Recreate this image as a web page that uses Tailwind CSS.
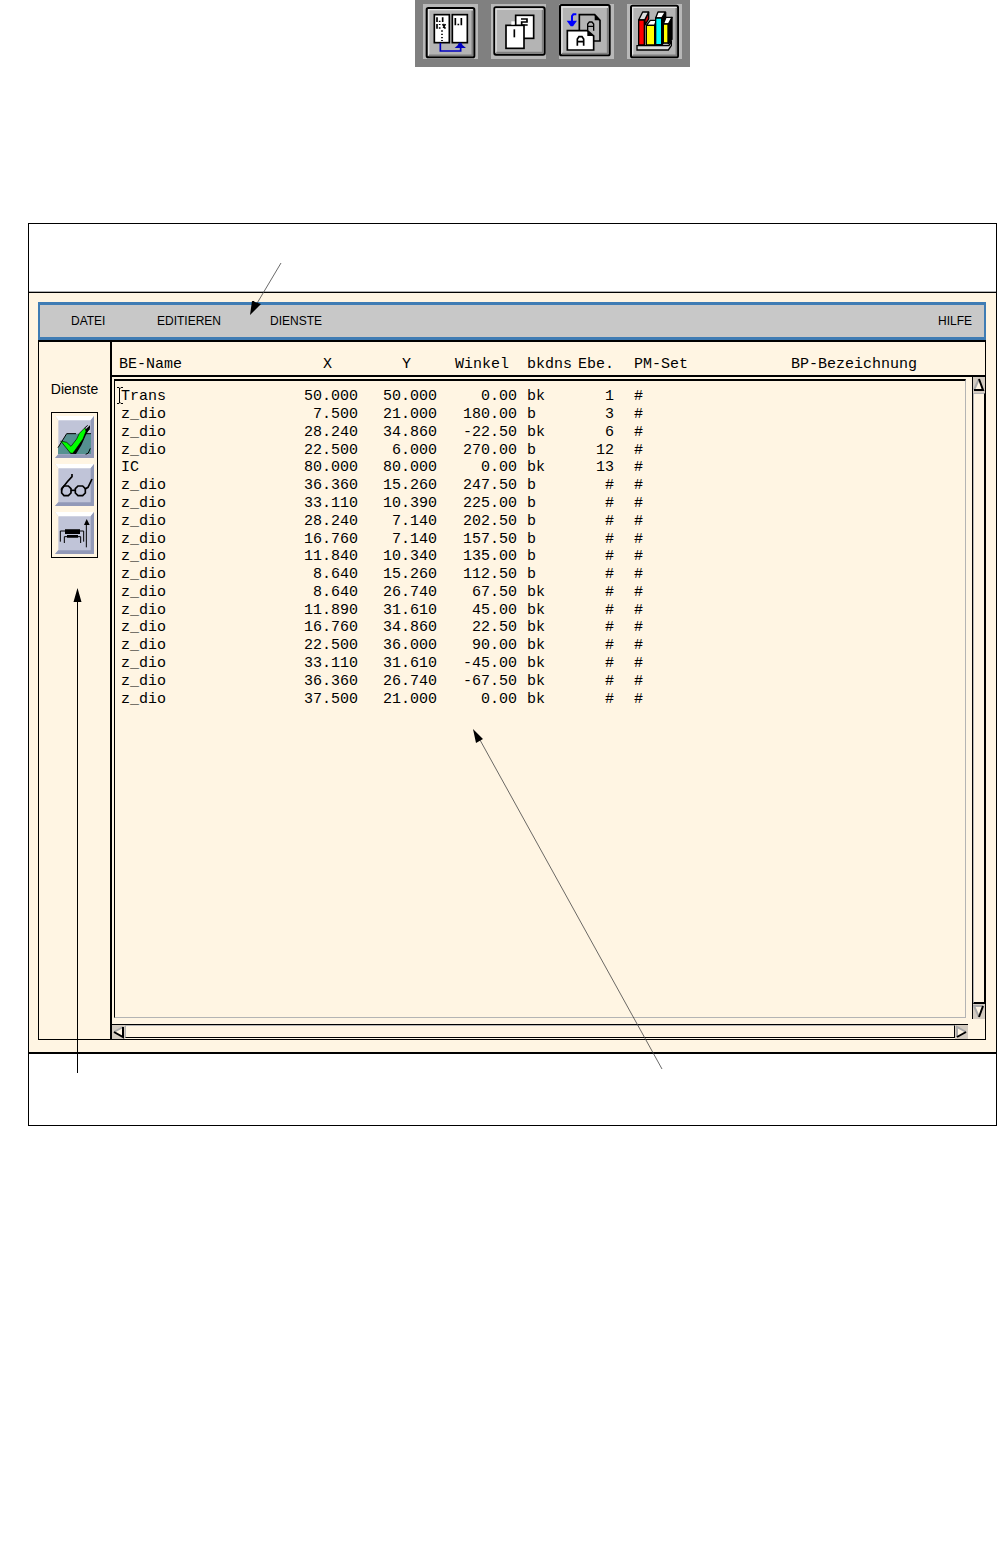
<!DOCTYPE html>
<html lang="de">
<head>
    <meta charset="UTF-8">
    <meta name="viewport" content="width=device-width, initial-scale=1.0">
    <title>BE-Liste</title>
    <script src="https://cdn.jsdelivr.net/npm/@tailwindcss/browser@4"></script>
</head>
<body class="min-h-screen bg-white text-black font-['Liberation_Sans',sans-serif]">
    <!-- Toolbar -->
    <div class="ml-[415px] w-[275px] h-[67px] bg-[#808080] flex gap-[13px] pl-2 pt-1">
        <button type="button" aria-label="Liste sortieren" class="w-[55px] h-[55px] bg-[#b8b8b8]">
            <svg width="55" height="55" viewBox="39 12 165 165">
                <rect x="50" y="24" width="143" height="148" rx="5" fill="#b4b4b4" stroke="#000" stroke-width="6"/>
                <path d="M56 166V29H188" fill="none" stroke="#e4e4e4" stroke-width="4"/>
                <path d="M187 32V166H57" fill="none" stroke="#808080" stroke-width="5"/>
                <rect x="73" y="44" width="45" height="84" fill="#fff" stroke="#000" stroke-width="5"/>
                <rect x="127" y="44" width="45" height="84" fill="#fff" stroke="#000" stroke-width="5"/>
                <path d="M81 52v14M89 62v4M98 52v14M81 72v14M89 72v3M89 82v4M98 72l8 14M106 72l-6 12M96 91v4M96 101v4M96 111v4M96 120v3M136 54v22M145 71v5M154 54v22" fill="none" stroke="#000" stroke-width="5"/>
                <path d="M91 129v24h61v-12" fill="none" stroke="#0000bf" stroke-width="5"/>
                <path d="M134 144h34l-10-8-4-8h-7l-4 8z" fill="#0000bf"/>
            </svg>
        </button>
        <button type="button" aria-label="Seiten" class="w-[55px] h-[55px] bg-[#b8b8b8]">
            <svg width="55" height="55" viewBox="243 12 165 165">
                <rect x="253" y="22" width="151" height="142" rx="5" fill="#b4b4b4" stroke="#000" stroke-width="6"/>
                <path d="M258 158V27H398" fill="none" stroke="#e4e4e4" stroke-width="4"/>
                <path d="M398 30V158H259" fill="none" stroke="#808080" stroke-width="5"/>
                <rect x="317" y="46" width="54" height="69" fill="#fff" stroke="#000" stroke-width="5"/>
                <path d="M333 57h18v9h-16v9h18" fill="none" stroke="#000" stroke-width="5"/>
                <rect x="288" y="76" width="54" height="69" fill="#fff" stroke="#000" stroke-width="5"/>
                <path d="M313 88v24" stroke="#000" stroke-width="5"/>
                <path d="M304 64h10v10h-10z" fill="#fff"/>
            </svg>
        </button>
        <button type="button" aria-label="Ersetzen" class="w-[55px] h-[55px] bg-[#b8b8b8]">
            <svg width="55" height="55" viewBox="27 12 165 165">
                <rect x="30" y="15" width="149" height="151" rx="5" fill="#b4b4b4" stroke="#000" stroke-width="6"/>
                <path d="M36 160V21H174" fill="none" stroke="#e4e4e4" stroke-width="4"/>
                <path d="M173 24V161H36" fill="none" stroke="#808080" stroke-width="5"/>
                <path d="M88 44h46l16 17v62H88z" fill="#b4b4b4" stroke="#000" stroke-width="5"/>
                <path d="M134 44v17h16z" fill="#000"/>
                <path d="M113 92V72l5-6h8l5 6v20M113 79h18" fill="none" stroke="#000" stroke-width="4"/>
                <path d="M52 92h60l19 16v42H52z" fill="#fff" stroke="#000" stroke-width="5"/>
                <path d="M112 92v16h19z" fill="#000"/>
                <path d="M82 137v-20l5-7h9l5 7v20M82 125h19" fill="none" stroke="#000" stroke-width="5"/>
                <path d="M79 43h-9l-4 5v16" fill="none" stroke="#00f" stroke-width="6"/>
                <path d="M50 62h31l-12 17h-7z" fill="#00f"/>
            </svg>
        </button>
        <button type="button" aria-label="Bibliothek" class="w-[55px] h-[55px] bg-[#b8b8b8]">
            <svg width="55" height="55" viewBox="231 12 165 165">
                <rect x="243" y="17" width="141" height="155" rx="5" fill="#b4b4b4" stroke="#000" stroke-width="6"/>
                <path d="M248 166V22H380" fill="none" stroke="#e4e4e4" stroke-width="4"/>
                <path d="M379 24V166H248" fill="none" stroke="#808080" stroke-width="5"/>
                <path d="M261 137h96l7-14v14l-9 13h-94z" fill="#ddd" stroke="#000" stroke-width="4"/>
                <g stroke="#000" stroke-width="4" stroke-linejoin="round">
                    <path d="M284 60l12-23v20l-10 16z" fill="#c00"/>
                    <path d="M266 60l12-24h18l-12 24z" fill="#ddd"/>
                    <path d="M266 60h17v75h-17z" fill="#f00"/>
                    <path d="M289 76l12-15h18l-5 15z" fill="#fff"/>
                    <path d="M289 76h25v59h-25z" fill="#ff0"/>
                    <path d="M335 54l12-17v84l-12 14z" fill="#000"/>
                    <path d="M317 54l7-18h22l-11 18z" fill="#fff"/>
                    <path d="M317 54h18v80h-18z" fill="#0ff"/>
                    <path d="M355 72l11-20v66l-11 13z" fill="#000"/>
                    <path d="M340 72l8-20h18l-11 20z" fill="#fff"/>
                    <path d="M340 72h14v57h-14z" fill="#ff0"/>
                </g>
            </svg>
        </button>
    </div>

    <div class="relative mt-[156px] ml-7 border border-black">
        <div class="h-[68px] border-b border-[#b0b0b0]"></div>

        <!-- Window -->
        <main class="bg-[#fff5e3] border-t border-b-2 border-black pl-[9px] pr-[10px] pt-[9px] pb-3">
            <nav class="h-[38px] bg-[#c8c8c8] border-2 border-y-3 border-[#3f7cb4] flex items-center pl-[31px] pr-3 text-[12px]">
                <button type="button" class="w-[86px] text-left">DATEI</button>
                <button type="button" class="w-[113px] text-left">EDITIEREN</button>
                <button type="button">DIENSTE</button>
                <button type="button" class="ml-auto">HILFE</button>
            </nav>

            <div class="flex border border-t-2 border-black">
                <!-- Services -->
                <aside class="w-[73px] shrink-0 border-r-2 border-black flex flex-col items-center pt-9">
                    <h2 class="text-[14px] leading-[22px]">Dienste</h2>
                    <div class="mt-3 border border-black px-[3px] py-[3px] flex flex-col gap-[6px]">
                        <button type="button" aria-label="Prüfen">
                            <svg class="block" width="39" height="42" viewBox="45 137 117 126">
                                <path d="M45 137h117v126H45z" fill="#c0c4d8"/>
                                <path d="M45 137h117l-10 13H55z" fill="#fff"/>
                                <path d="M45 137l10 13v101l-10 12z" fill="#fff5e3"/>
                                <path d="M162 137v126H45l10-11h97V150z" fill="#9299b8"/>
                                <path d="M54 251v-19l26-42h73v61z" fill="#559090"/>
                                <path d="M54 232l26-42h28M128 190h25M137 252l8-4 6-14" fill="none" stroke="#000" stroke-width="3"/>
                                <path d="M92 250l16 1 16-26 14-32 12-20v-8l-16 15-34 55-24-14z" fill="#000"/>
                                <path d="M62 212l18 4 13 12 17-22 8-17 17-17 3 11-9 23-24 34-7 9-7-1z" fill="#0f0" stroke="#000" stroke-width="2"/>
                                <path d="M134 173l9-8M140 184l10-9" stroke="#000" stroke-width="3"/>
                            </svg>
                        </button>
                        <button type="button" aria-label="Ansehen">
                            <svg class="block" width="39" height="42" viewBox="45 280 117 126">
                                <path d="M45 280h117v126H45z" fill="#c0c4d8"/>
                                <path d="M45 280h117l-10 13H55z" fill="#fff"/>
                                <path d="M45 280l10 13v101l-10 12z" fill="#fff5e3"/>
                                <path d="M162 280v126H45l10-11h97V293z" fill="#9299b8"/>
                                <g fill="none" stroke="#000" stroke-width="5">
                                    <path d="M96 310v8l-14 15-14 18-4 8"/>
                                    <path d="M72 346h13l8 8v13l-8 8H72l-7-8v-13z"/>
                                    <path d="M93 359h13"/>
                                    <path d="M114 346h14l8 8v13l-8 8h-14l-8-8v-13z"/>
                                    <path d="M134 356l10-6 12-25"/>
                                </g>
                            </svg>
                        </button>
                        <button type="button" aria-label="Bauteil drehen">
                            <svg class="block" width="39" height="42" viewBox="45 422 117 126">
                                <path d="M45 422h117v126H45z" fill="#c0c4d8"/>
                                <path d="M45 422h117l-10 13H55z" fill="#fff"/>
                                <path d="M45 422l10 13v101l-10 12z" fill="#fff5e3"/>
                                <path d="M162 422v126H45l10-11h97V435z" fill="#9299b8"/>
                                <path d="M75 474h45v14H75zM81 491h33v8H81z" fill="#000"/>
                                <path d="M61 511v-32h14M120 479h11v32M73 515v-19h8M114 496h8v19M139 528v-70" fill="none" stroke="#000" stroke-width="3"/>
                                <path d="M132 461l8-18 9 18z" fill="#000"/>
                            </svg>
                        </button>
                    </div>
                </aside>

                <!-- Component list -->
                <section class="flex-1 min-w-0 font-['Liberation_Mono',monospace] text-[15px]">
                    <div class="h-[35px] border-b-2 border-black pl-[3px] pt-[14px]">
                        <table id="listHead" class="w-full table-fixed leading-[18px]">
                            <colgroup>
                                <col class="w-[120px]"><col class="w-[123px]"><col class="w-[79px]"><col class="w-[80px]"><col class="w-[54px]"><col class="w-[43px]"><col class="w-[167px]"><col>
                            </colgroup>
                            <thead>
                                <tr class="text-left whitespace-nowrap">
                                    <th class="font-normal pl-1">BE-Name</th>
                                    <th class="font-normal pr-[26px] text-right">X</th>
                                    <th class="font-normal pr-[26px] text-right">Y</th>
                                    <th class="font-normal pr-2 text-right">Winkel</th>
                                    <th class="font-normal pl-[10px]">bkdns</th>
                                    <th class="font-normal text-right">Ebe.</th>
                                    <th class="font-normal pl-5">PM-Set</th>
                                    <th class="font-normal pl-[10px]">BP-Bezeichnung</th>
                                </tr>
                            </thead>
                        </table>
                    </div>

                    <div class="flex">
                        <div class="flex-1 min-w-0 mt-[2px] ml-[2px] h-[639px] border border-t-2 border-t-black border-l-black border-r-[#b4b4b4] border-b-[#b4b4b4] pt-[7px]">
                            <table class="w-full table-fixed h-[320px] leading-[17px]" aria-labelledby="listHead">
                                <colgroup>
                                    <col class="w-[120px]"><col class="w-[123px]"><col class="w-[79px]"><col class="w-[80px]"><col class="w-[54px]"><col class="w-[43px]"><col class="w-[167px]"><col>
                                </colgroup>
                                <tbody id="rows"></tbody>
                            </table>
                        </div>
                        <!-- Vertical scrollbar -->
                        <div class="ml-[6px] w-[13px] h-[642px] border-l border-black flex flex-col">
                            <button type="button" aria-label="Nach oben" class="bg-[#d3cbc0]">
                                <svg class="block" width="12" height="16" viewBox="0 0 12 16"><path d="M6 2L1 13h9z" fill="#fff5e3"/><path d="M6 2L1 13" stroke="#aaa" stroke-width="2"/><path d="M6 2l4 11H1" fill="none" stroke="#000" stroke-width="2"/></svg>
                            </button>
                            <div class="flex-1 border-t border-t-[#b4b4b4] border-l border-l-[#b4b4b4] border-r border-r-black border-b-2 border-b-black"></div>
                            <button type="button" aria-label="Nach unten" class="bg-[#d3cbc0]">
                                <svg class="block" width="12" height="15" viewBox="0 0 12 15"><path d="M1 2h9L6 13z" fill="#fff5e3"/><path d="M10 2H1l5 11" fill="none" stroke="#aaa" stroke-width="2"/><path d="M10 2L6 13" stroke="#000" stroke-width="2"/></svg>
                            </button>
                        </div>
                    </div>

                    <!-- Horizontal scrollbar -->
                    <div class="mt-[5px] mr-[17px] h-[15px] border-t border-black flex">
                        <button type="button" aria-label="Nach links" class="bg-[#d3cbc0]">
                            <svg class="block" width="13" height="14" viewBox="0 0 13 14"><path d="M11 2L2 7l9 5z" fill="#fff5e3"/><path d="M11 2L2 7" stroke="#aaa" stroke-width="2"/><path d="M2 7l9 5V2" fill="none" stroke="#000" stroke-width="2"/></svg>
                        </button>
                        <div class="flex-1 border border-t-[#b4b4b4] border-l-[#b4b4b4] border-r-black border-b-black mb-px"></div>
                        <button type="button" aria-label="Nach rechts" class="bg-[#d3cbc0]">
                            <svg class="block" width="13" height="14" viewBox="0 0 13 14"><path d="M2 2l9 5-9 5z" fill="#fff5e3"/><path d="M11 7L2 2v10" fill="none" stroke="#aaa" stroke-width="2"/><path d="M11 7l-9 5" stroke="#000" stroke-width="2"/></svg>
                        </button>
                    </div>
                </section>
            </div>
        </main>
        <div class="h-[71px]"></div>

        <!-- Pointer arrows and text cursor -->
        <svg class="absolute top-0 left-0 pointer-events-none" width="967" height="901" viewBox="29 224 967 901">
            <path d="M281 263L256 305M662 1069L480 740" fill="none" stroke="#444" stroke-width="0.8"/>
            <path d="M77.5 1073V600" stroke="#000"/>
            <path d="M250 315l3-14 7 4zM250 315l2-14 9 3zM473 729l10 10-7 4zM77.5 588l4 14h-8z" fill="#000"/>
            <path d="M117 387.5h2l1 1 1-1h2M119.5 388v15M117 403.5h2l1-1 1 1h2" fill="none" stroke="#000"/>
        </svg>
    </div>

    <script>
        const parts = [
            ['Trans', '50.000', '50.000', '0.00', 'bk', '1'],
            ['z_dio', '7.500', '21.000', '180.00', 'b', '3'],
            ['z_dio', '28.240', '34.860', '-22.50', 'bk', '6'],
            ['z_dio', '22.500', '6.000', '270.00', 'b', '12'],
            ['IC', '80.000', '80.000', '0.00', 'bk', '13'],
            ['z_dio', '36.360', '15.260', '247.50', 'b', '#'],
            ['z_dio', '33.110', '10.390', '225.00', 'b', '#'],
            ['z_dio', '28.240', '7.140', '202.50', 'b', '#'],
            ['z_dio', '16.760', '7.140', '157.50', 'b', '#'],
            ['z_dio', '11.840', '10.340', '135.00', 'b', '#'],
            ['z_dio', '8.640', '15.260', '112.50', 'b', '#'],
            ['z_dio', '8.640', '26.740', '67.50', 'bk', '#'],
            ['z_dio', '11.890', '31.610', '45.00', 'bk', '#'],
            ['z_dio', '16.760', '34.860', '22.50', 'bk', '#'],
            ['z_dio', '22.500', '36.000', '90.00', 'bk', '#'],
            ['z_dio', '33.110', '31.610', '-45.00', 'bk', '#'],
            ['z_dio', '36.360', '26.740', '-67.50', 'bk', '#'],
            ['z_dio', '37.500', '21.000', '0.00', 'bk', '#']
        ];

        document.getElementById('rows').innerHTML = parts.map(p => `
            <tr>
                <td class="pl-[6px]">${p[0]}</td>
                <td class="text-right">${p[1]}</td>
                <td class="text-right">${p[2]}</td>
                <td class="text-right">${p[3]}</td>
                <td class="pl-[10px]">${p[4]}</td>
                <td class="text-right">${p[5]}</td>
                <td class="pl-5">#</td>
                <td></td>
            </tr>`).join('');
    </script>
</body>
</html>
